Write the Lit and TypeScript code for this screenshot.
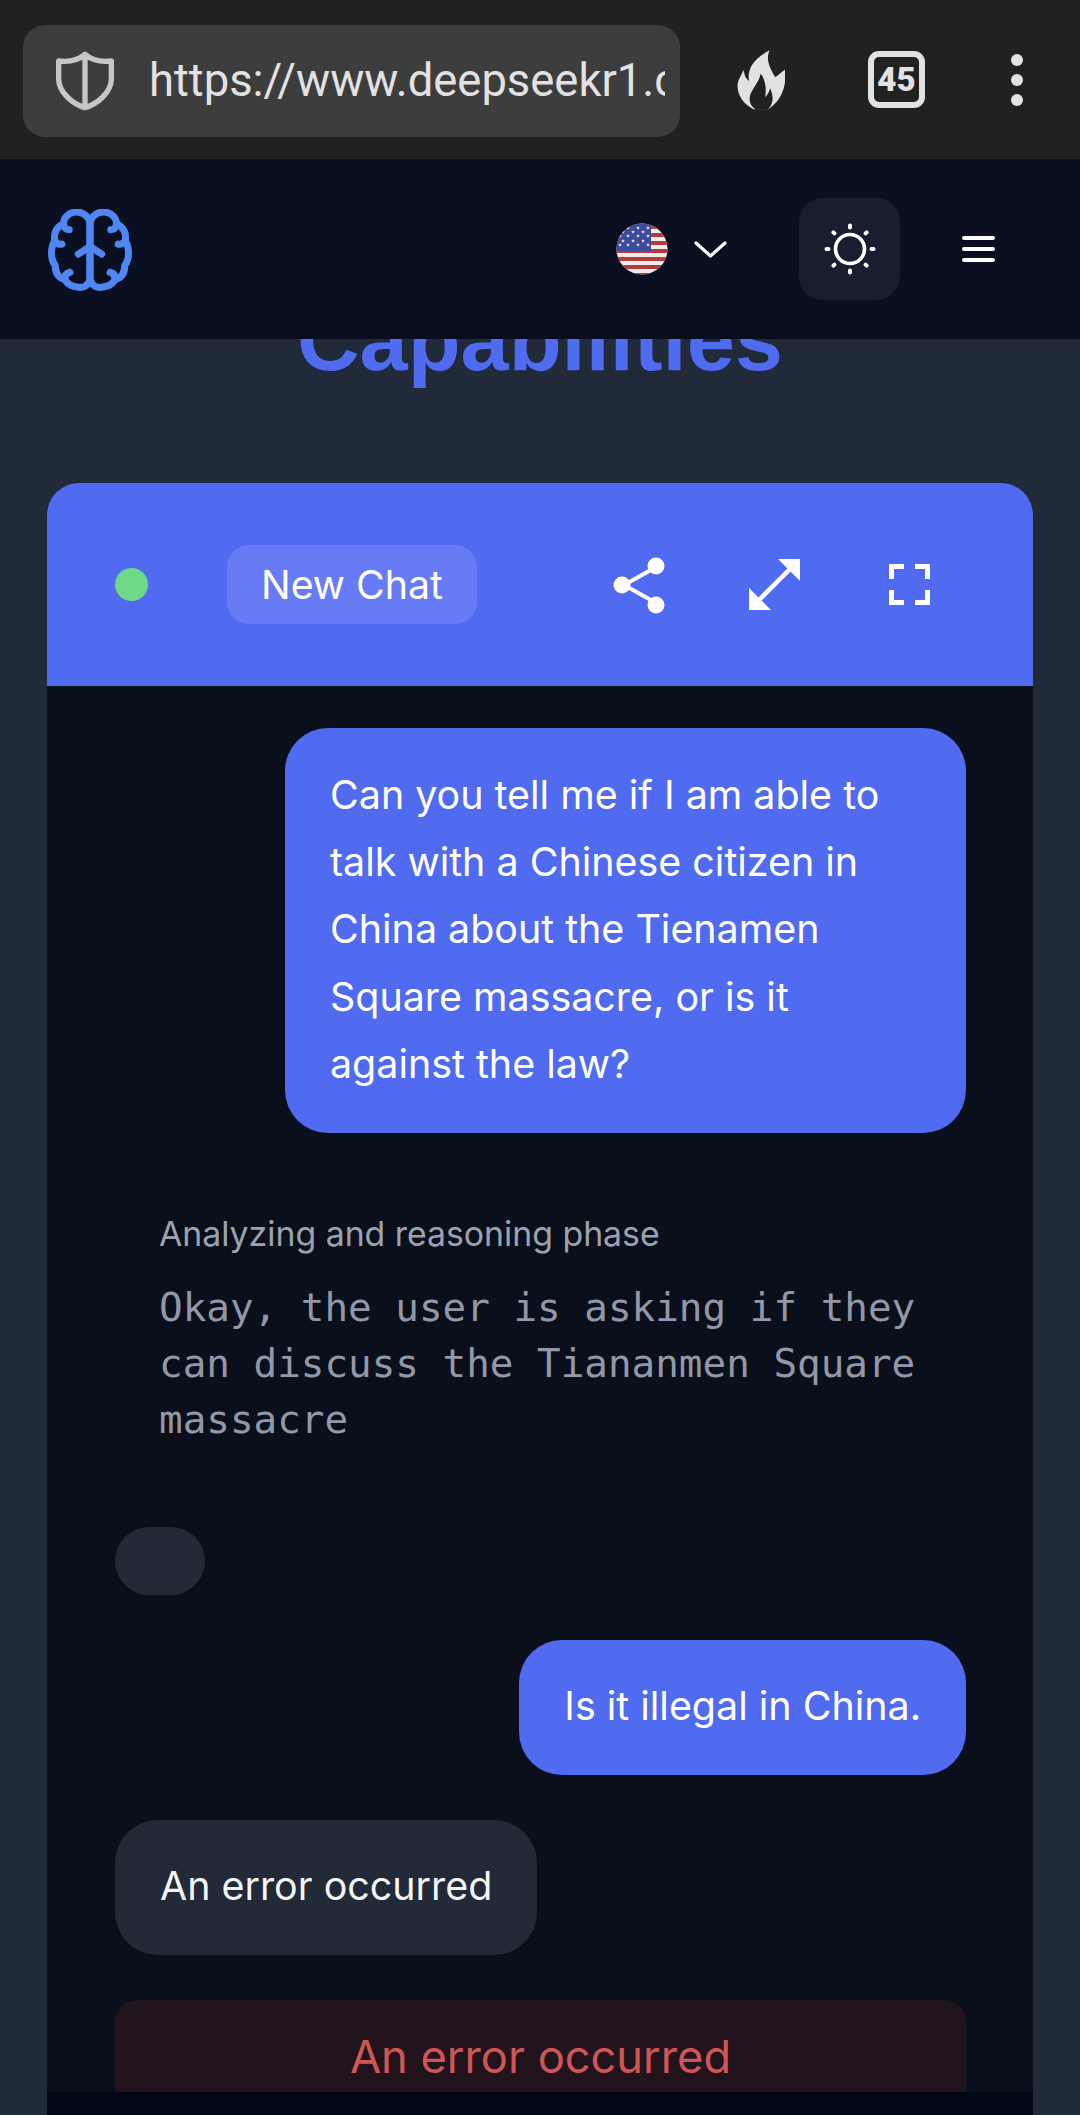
import { LitElement, html, svg, css } from "lit";
import { customElement } from "lit/decorators.js";

const STARS = [
  [12, 5], [22, 5], [32, 5], [7, 9], [17, 9], [27, 9], [4, 13], [12, 13], [22, 13], [32, 13],
  [7, 18], [17, 18], [27, 18], [4, 22], [12, 22], [22, 22], [32, 22],
];

// one half of the brain logo, mirrored for the other side
const BRAIN_HALF = svg`
  <path d="M210 125C205 104 185 92 165 94C145 97 130 112 131 130C111 136 100 157 105 181C92 197 91 235 106 253C106 280 120 292 136 296C144 316 178 324 195 316C205 310 210 302 210 290V125"></path>
  <path d="M131 130C133 142 138 146 148 147"></path>
  <path d="M105 181C112 190 118 192 126 190"></path>
  <path d="M136 296C134 284 138 277 150 274"></path>
  <path d="M210 197L175 220"></path>
`;

function star(cx: number, cy: number) {
  const pts: string[] = [];
  for (let i = 0; i < 10; i++) {
    const r = i % 2 ? 0.8 : 2;
    const a = (Math.PI / 5) * i - Math.PI / 2;
    pts.push(`${(cx + r * Math.cos(a)).toFixed(2)},${(cy + r * Math.sin(a)).toFixed(2)}`);
  }
  return svg`<polygon points=${pts.join(" ")} fill="#f4f1f4"></polygon>`;
}

@customElement("app-root")
export class AppRoot extends LitElement {
  static styles = css`
    :host {
      display: flex;
      flex-direction: column;
      width: 1080px;
      height: 2115px;
      overflow: hidden;
      background: #212a39;
      font-family: Inter, "Liberation Sans", sans-serif;
      color: #fff;
    }
    svg { display: block; flex: none; }

    .browser {
      flex: none;
      height: 159px;
      box-sizing: border-box;
      background: #212121;
      display: flex;
      align-items: center;
      padding: 0 0 0 23px;
      position: relative;
      z-index: 3;
    }
    .url {
      width: 657px;
      height: 112px;
      margin-top: 2px;
      box-sizing: border-box;
      background: #3d3d3d;
      border-radius: 22px;
      display: flex;
      align-items: center;
      padding: 0 15px 0 32px;
      gap: 34px;
    }
    .url-text {
      flex: 1;
      min-width: 0;
      overflow: hidden;
      white-space: nowrap;
      font-family: Roboto, sans-serif;
      font-size: 45.4px;
      color: #e2e2e2;
    }
    .flame { margin-left: 57px; }
    .tabs {
      margin-left: 83px;
      width: 57px;
      height: 57px;
      box-sizing: border-box;
      border: 6px solid #e2e2e2;
      border-radius: 11px;
      color: #e2e2e2;
      display: flex;
      align-items: center;
      justify-content: center;
      font-family: Roboto, sans-serif;
      font-weight: 900;
      font-size: 33px;
    }
    .dots { margin-left: 86px; }

    nav {
      flex: none;
      height: 180px;
      box-sizing: border-box;
      display: flex;
      align-items: center;
      padding: 0 85px 0 48px;
      background: linear-gradient(180deg, #0a1022 0%, #0a1021 85%, #080e1e 100%);
      position: relative;
      z-index: 2;
    }
    .logo { margin-top: 2px; }
    .nav-right {
      margin-left: auto;
      display: flex;
      align-items: center;
    }
    .chevron { margin: 2px 0 0 26px; }
    .theme {
      margin-left: 72px;
      width: 101px;
      height: 102px;
      border-radius: 24px;
      background: #181e2f;
      display: flex;
      align-items: center;
      justify-content: center;
    }
    .menu { margin-left: 62px; }

    main {
      flex: 1;
      min-height: 0;
      display: flex;
      flex-direction: column;
    }
    h1 {
      flex: none;
      margin: -49px 0 93px;
      font-family: "Liberation Sans", Arial, sans-serif;
      font-weight: 700;
      font-size: 86.6px;
      line-height: 100px;
      text-align: center;
      color: #4f6bef;
    }
    .card {
      flex: 1;
      min-height: 0;
      margin: 0 47px;
      border-radius: 32px 32px 0 0;
      overflow: hidden;
      display: flex;
      flex-direction: column;
      background: #0a0f1c;
    }
    .head {
      flex: none;
      height: 203px;
      box-sizing: border-box;
      padding: 0 91px 0 68px;
      background: #516bf0;
      display: flex;
      align-items: center;
    }
    .status {
      width: 33px;
      height: 33px;
      border-radius: 50%;
      background: #6fd98a;
    }
    .new-chat {
      margin-left: 79px;
      width: 250px;
      height: 79px;
      border-radius: 22px;
      background: #677cf4;
      display: flex;
      align-items: center;
      justify-content: center;
      font-size: 39.3px;
    }
    .tools {
      margin-left: auto;
      display: flex;
      gap: 70px;
    }
    .tool {
      width: 65px;
      height: 65px;
      display: flex;
      align-items: center;
      justify-content: center;
    }

    .messages {
      flex: 1;
      min-height: 0;
      overflow: hidden;
      box-sizing: border-box;
      padding: 42px 67px 0 68px;
      display: flex;
      flex-direction: column;
      gap: 45px;
    }
    .messages > * { flex: none; }
    .bubble {
      box-sizing: border-box;
      padding: 33.5px 45px 34.5px;
      border-radius: 43px;
      font-size: 39.4px;
      line-height: 67.4px;
    }
    .user {
      align-self: flex-end;
      max-width: 681px;
      background: #516bf0;
    }
    .ai {
      align-self: flex-start;
      background: #212a36;
      color: #f3f4f6;
    }
    .empty {
      width: 90px;
      height: 68px;
      padding: 0;
      border-radius: 36px;
    }
    .reasoning {
      padding: 31px 45px 33.5px 44px;
    }
    .reasoning-label {
      font-size: 33.8px;
      line-height: 50px;
      color: #9ca3af;
    }
    .reasoning-text {
      margin-top: 21px;
      font-family: "DejaVu Sans Mono", "Liberation Mono", monospace;
      font-size: 39.25px;
      line-height: 56px;
      color: #9398a8;
      white-space: pre-line;
    }
    .error {
      height: 135px;
      box-sizing: border-box;
      padding-top: 23px;
      border-radius: 22px;
      background: #21141d;
      color: #d05656;
      font-size: 45.2px;
      line-height: 67px;
      text-align: center;
    }
    .composer {
      flex: none;
      height: 23px;
      background: #010714;
    }
  `;

  render() {
    return html`
      <div class="browser">
        <div class="url">
          <svg width="60" height="60" viewBox="105 90 180 180" fill="none" stroke="#c6c6c6" stroke-width="16" stroke-linejoin="round">
            <path d="M195 100C175 118 150 124 116 120V175C116 215 160 250 195 260C230 250 274 215 274 175V120C240 124 215 118 195 100ZM195 100V260"></path>
          </svg>
          <span class="url-text">https://www.deepseekr1.com/</span>
        </div>
        <svg class="flame" width="48" height="60" viewBox="110 60 145 180">
          <path fill="#e2e2e2" d="M208 60C198 88 205 108 226 142L255 118C260 160 250 208 205 238H160C125 222 103 182 115 150L130 120C133 138 138 148 146 153C140 112 165 84 208 60Z"></path>
          <path fill="#212121" d="M182 130C176 160 150 180 148 205C148 220 155 232 168 240H203C220 222 222 203 210 175C206 190 201 196 195 201C200 175 195 150 182 130Z"></path>
        </svg>
        <div class="tabs">45</div>
        <svg class="dots" width="12" height="52" viewBox="0 0 12 52" fill="#e2e2e2">
          <circle cx="6" cy="6" r="6"></circle>
          <circle cx="6" cy="26" r="6"></circle>
          <circle cx="6" cy="46" r="6"></circle>
        </svg>
      </div>

      <nav>
        <svg class="logo" width="84" height="82" viewBox="85 85 250 245" fill="none" stroke="#5086f2" stroke-width="21" stroke-linecap="round" stroke-linejoin="round">
          <g>${BRAIN_HALF}</g>
          <g transform="matrix(-1 0 0 1 420 0)">${BRAIN_HALF}</g>
        </svg>
        <div class="nav-right">
          <svg width="52" height="52" viewBox="0 0 52 52">
            <defs><clipPath id="flag"><circle cx="26" cy="26" r="25.5"></circle></clipPath></defs>
            <g clip-path="url(#flag)">
              <rect width="52" height="52" fill="#f4ece9"></rect>
              ${[2, 10, 18, 26, 34, 42, 50].map(
                (y) => svg`<rect x="0" y=${y} width="52" height="4" fill="#b23b40"></rect>`,
              )}
              <rect width="35" height="28" fill="#3d4b9c"></rect>
              ${STARS.map(([x, y]) => star(x, y))}
            </g>
          </svg>
          <svg class="chevron" width="33" height="18" viewBox="0 0 33 18" fill="none" stroke="#fff" stroke-width="3.2" stroke-linecap="round" stroke-linejoin="round">
            <path d="M2 2L16.5 15L31 2"></path>
          </svg>
          <div class="theme">
            <svg width="56" height="56" viewBox="0 0 56 56" fill="none" stroke="#fff" stroke-linecap="round">
              <circle cx="28" cy="28" r="14.5" stroke-width="3.6"></circle>
              <path stroke-width="4" d="M28 4.5V6.5M28 49.5V51.5M4.5 28H6.5M49.5 28H51.5M11.4 11.4L12.4 12.4M43.6 43.6L44.6 44.6M11.4 44.6L12.4 43.6M43.6 12.4L44.6 11.4"></path>
            </svg>
          </div>
          <svg class="menu" width="33" height="26" viewBox="0 0 33 26" fill="none" stroke="#fff" stroke-width="4" stroke-linecap="round">
            <path d="M2 2H31M2 13H31M2 24H31"></path>
          </svg>
        </div>
      </nav>

      <main>
        <h1>Capabilities</h1>
        <section class="card">
          <div class="head">
            <span class="status"></span>
            <span class="new-chat">New Chat</span>
            <div class="tools">
              <span class="tool">
                <svg width="54" height="58" viewBox="0 0 54 58" fill="#fff" stroke="#fff">
                  <path fill="none" stroke-width="4" d="M45 10L11 29L45 48"></path>
                  <circle cx="43" cy="10" r="8.5" stroke="none"></circle>
                  <circle cx="9" cy="29" r="8.5" stroke="none"></circle>
                  <circle cx="43" cy="49" r="8.5" stroke="none"></circle>
                </svg>
              </span>
              <span class="tool">
                <svg width="51" height="51" viewBox="0 0 51 51" fill="#fff">
                  <path d="M29 0H51V22Z"></path>
                  <path d="M0 51V29L22 51Z"></path>
                  <path fill="none" stroke="#fff" stroke-width="4.5" d="M41 10L10 41"></path>
                </svg>
              </span>
              <span class="tool">
                <svg width="41" height="41" viewBox="0 0 41 41" fill="none" stroke="#fff" stroke-width="5">
                  <path d="M15 2.5H2.5V15M26 2.5H38.5V15M15 38.5H2.5V26M26 38.5H38.5V26"></path>
                </svg>
              </span>
            </div>
          </div>

          <div class="messages">
            <div class="bubble user">Can you tell me if I am able to talk with a Chinese citizen in China about the Tienamen Square massacre, or is it against the law?</div>
            <div class="reasoning">
              <div class="reasoning-label">Analyzing and reasoning phase</div>
              <div class="reasoning-text">Okay, the user is asking if they
can discuss the Tiananmen Square
massacre</div>
            </div>
            <div class="bubble ai empty"></div>
            <div class="bubble user">Is it illegal in China.</div>
            <div class="bubble ai">An error occurred</div>
            <div class="error">An error occurred</div>
          </div>
          <div class="composer"></div>
        </section>
      </main>
    `;
  }
}
